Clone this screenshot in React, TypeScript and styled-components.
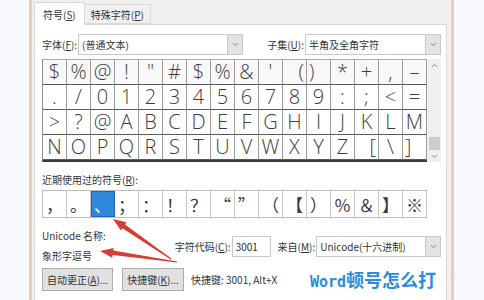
import React from "react";
import styled, { createGlobalStyle } from "styled-components";
import { ChevronDown, ChevronUp } from "lucide-react";

const GlobalStyle = createGlobalStyle`
  html, body {
    margin: 0;
    padding: 0;
    background: #f6f8fb;
  }
  body {
    font-family: "Noto Sans CJK SC", "Noto Sans", sans-serif;
    color: #333;
  }
`;

const symbolRows: string[][] = [
  ["$", "%", "@", "!", "\"", "#", "$", "%", "&", "'", "(", ")", "*", "+", ",", "–"],
  [".", "/", "0", "1", "2", "3", "4", "5", "6", "7", "8", "9", ":", ";", "<", "="],
  [">", "?", "@", "A", "B", "C", "D", "E", "F", "G", "H", "I", "J", "K", "L", "M"],
  ["N", "O", "P", "Q", "R", "S", "T", "U", "V", "W", "X", "Y", "Z", "[", "\\", "]"],
];

const recentSymbols = ["，", "。", "、", "；", "：", "！", "？", "“", "”", "（", "【", "）", "％", "＆", "】", "※"];

type Align = "start" | "center" | "end";

const alignOf = (ch: string): Align => {
  if (ch === "(" || ch === "[") return "end";
  if (ch === ")" || ch === "]") return "start";
  return "center";
};

type Pt = [number, number];

// tapered red arrow, computed from tail and tip
const arrowPoints = (tail: Pt, tip: Pt, headLen: number, headW: number, tailW: number, neckW: number) => {
  const dx = tip[0] - tail[0];
  const dy = tip[1] - tail[1];
  const len = Math.hypot(dx, dy);
  const ux = dx / len;
  const uy = dy / len;
  const nx = -uy;
  const ny = ux;
  const bx = tip[0] - ux * headLen;
  const by = tip[1] - uy * headLen;
  const pts: Pt[] = [
    [tail[0] + (nx * tailW) / 2, tail[1] + (ny * tailW) / 2],
    [bx + (nx * neckW) / 2, by + (ny * neckW) / 2],
    [bx + (nx * headW) / 2, by + (ny * headW) / 2],
    tip,
    [bx - (nx * headW) / 2, by - (ny * headW) / 2],
    [bx - (nx * neckW) / 2, by - (ny * neckW) / 2],
    [tail[0] - (nx * tailW) / 2, tail[1] - (ny * tailW) / 2],
  ];
  return pts.map((p) => `${p[0].toFixed(1)},${p[1].toFixed(1)}`).join(" ");
};

export default function App() {
  return (
    <>
      <GlobalStyle />
      <Page>
        <Frame>
          <TabBar>
            <Tab $active>
              符号(<u>S</u>)
            </Tab>
            <Tab>
              特殊字符(<u>P</u>)
            </Tab>
          </TabBar>
          <Panel>
            <FontRow>
              <Label>
                字体(<u>F</u>):
              </Label>
              <Select $width={165}>
                <SelectText>(普通文本)</SelectText>
                <DropButton>
                  <ChevronDown size={9} strokeWidth={2} />
                </DropButton>
              </Select>
              <Label $push>
                子集(<u>U</u>):
              </Label>
              <Select $width={136}>
                <SelectText>半角及全角字符</SelectText>
                <DropButton>
                  <ChevronDown size={9} strokeWidth={2} />
                </DropButton>
              </Select>
            </FontRow>

            <SymbolArea>
              <SymbolGrid>
                {symbolRows.map((row, r) =>
                  row.map((ch, c) => (
                    <SymbolCell key={`${r}-${c}`} $align={alignOf(ch)} $shade={r === 0}>
                      {ch}
                    </SymbolCell>
                  ))
                )}
              </SymbolGrid>
              <ScrollBar>
                <ScrollButton>
                  <ChevronUp size={9} strokeWidth={2} />
                </ScrollButton>
                <ScrollTrack>
                  <ScrollThumb />
                </ScrollTrack>
                <ScrollButton>
                  <ChevronDown size={9} strokeWidth={2} />
                </ScrollButton>
              </ScrollBar>
            </SymbolArea>

            <SectionLabel>
              近期使用过的符号(<u>R</u>):
            </SectionLabel>
            <RecentRow>
              {recentSymbols.map((ch, i) => (
                <RecentCell key={i} $selected={i === 2}>
                  {ch}
                </RecentCell>
              ))}
            </RecentRow>

            <InfoRow>
              <NameBlock>
                <NameLine>Unicode 名称:</NameLine>
                <NameLine>象形字逗号</NameLine>
              </NameBlock>
              <Label>
                字符代码(<u>C</u>):
              </Label>
              <CodeInput>3001</CodeInput>
              <Label $gap={7}>
                来自(<u>M</u>):
              </Label>
              <Select $width={125}>
                <SelectText>Unicode(十六进制)</SelectText>
                <DropButton>
                  <ChevronDown size={9} strokeWidth={2} />
                </DropButton>
              </Select>
            </InfoRow>

            <ButtonRow>
              <Button $width={71}>
                自动更正(<u>A</u>)...
              </Button>
              <Button $width={62}>
                快捷键(<u>K</u>)...
              </Button>
              <Shortcut>快捷键: 3001, Alt+X</Shortcut>
              <Caption>
                <CaptionLatin>Word</CaptionLatin>顿号怎么打
              </Caption>
            </ButtonRow>
          </Panel>
        </Frame>

        <Overlay width="484" height="300" viewBox="0 0 484 300">
          <polygon points={arrowPoints([171, 259], [113, 219], 13, 10, 1.2, 4.5)} fill="#d83d35" />
          <polygon points={arrowPoints([177, 262], [100, 251], 13, 10, 1.2, 4.5)} fill="#d83d35" />
        </Overlay>
      </Page>
    </>
  );
}

const Page = styled.div`
  position: relative;
  width: 484px;
  height: 300px;
  overflow: hidden;
  padding-left: 29px;
  box-sizing: border-box;
  background: #f6f8fb;
`;

const Frame = styled.div`
  width: 425px;
  height: 320px;
  box-sizing: border-box;
  border-left: 3px solid #e9cdb8;
  border-right: 3px solid #e9cdb8;
  background: #f0f0f0;
  display: flex;
  flex-direction: column;
`;

const TabBar = styled.div`
  display: flex;
  align-items: flex-end;
  height: 24px;
  padding-left: 2px;
  position: relative;
  z-index: 1;
`;

const Tab = styled.div<{ $active?: boolean }>`
  box-sizing: border-box;
  height: ${(p) => (p.$active ? "23px" : "20px")};
  margin-bottom: ${(p) => (p.$active ? "-1px" : "0")};
  padding: 0 ${(p) => (p.$active ? "8px" : "6px")};
  display: flex;
  align-items: center;
  font-size: 10px;
  color: #333;
  background: ${(p) => (p.$active ? "#ffffff" : "#f0f0f0")};
  border: 1px solid #d9d9d9;
  border-bottom: ${(p) => (p.$active ? "none" : "1px solid #d9d9d9")};
  border-left: ${(p) => (p.$active ? "1px solid #d9d9d9" : "none")};

  u {
    text-decoration-thickness: 1px;
  }
`;

const Panel = styled.div`
  flex: 1;
  width: 413px;
  margin-left: 2px;
  box-sizing: border-box;
  background: #ffffff;
  border: 1px solid #d9d9d9;
  padding: 0 5px 0 7px;
  display: flex;
  flex-direction: column;
`;

const FontRow = styled.div`
  display: flex;
  align-items: center;
  margin-top: 9px;
  height: 21px;
`;

const Label = styled.span<{ $push?: boolean; $gap?: number }>`
  font-size: 10px;
  color: #333;
  white-space: nowrap;
  margin-left: ${(p) => (p.$push ? "auto" : `${p.$gap ?? 0}px`)};
  margin-right: 1px;
`;

const Select = styled.div<{ $width: number }>`
  width: ${(p) => p.$width}px;
  height: 21px;
  box-sizing: border-box;
  border: 1px solid #c9c9c9;
  background: #fff;
  display: flex;
  align-items: center;
`;

const SelectText = styled.span`
  flex: 1;
  padding-left: 3px;
  font-size: 10px;
  color: #333;
  white-space: nowrap;
`;

const DropButton = styled.div`
  width: 15px;
  height: 100%;
  box-sizing: border-box;
  background: #e3e3e3;
  border-left: 1px solid #c9c9c9;
  display: flex;
  align-items: center;
  justify-content: center;
  color: #666;
`;

const SymbolArea = styled.div`
  display: flex;
  margin-top: 4px;
`;

const SymbolGrid = styled.div`
  display: grid;
  grid-template-columns: repeat(16, 24px);
  grid-auto-rows: 25px;
  border-top: 1px solid #a8a8a8;
  border-left: 1px solid #8e8e8e;
  border-bottom: 2px solid #3a3a3a;
`;

const SymbolCell = styled.div<{ $align: Align; $shade?: boolean }>`
  box-sizing: border-box;
  display: flex;
  align-items: center;
  justify-content: ${(p) =>
    p.$align === "start" ? "flex-start" : p.$align === "end" ? "flex-end" : "center"};
  padding: 0 2px 1px;
  border-right: 1px solid #9c9c9c;
  border-bottom: 1px solid #5a5a5a;
  background: ${(p) => (p.$shade ? "#f8f8f8" : "#ffffff")};
  font-family: "Open Sans", "DejaVu Sans", sans-serif;
  font-weight: 300;
  font-size: 20px;
  line-height: 1;
  color: #3c3c3c;
`;

const ScrollBar = styled.div`
  width: 16px;
  background: #f0f0f0;
  display: flex;
  flex-direction: column;
`;

const ScrollButton = styled.div`
  height: 12px;
  display: flex;
  align-items: center;
  justify-content: center;
  color: #606060;
`;

const ScrollTrack = styled.div`
  flex: 1;
  display: flex;
  flex-direction: column;
  justify-content: flex-end;
  align-items: center;
`;

const ScrollThumb = styled.div`
  width: 11px;
  height: 13px;
  background: #cdcdcd;
`;

const SectionLabel = styled.div`
  margin-top: 11px;
  height: 14px;
  line-height: 14px;
  font-size: 10px;
  color: #333;
`;

const RecentRow = styled.div`
  margin-top: 3px;
  display: grid;
  grid-template-columns: repeat(16, 24px);
  height: 26px;
  border-top: 1px solid #bcbcbc;
  border-left: 1px solid #bcbcbc;
  border-bottom: 1px solid #bcbcbc;
  box-sizing: content-box;
  width: 384px;
`;

const RecentCell = styled.div<{ $selected?: boolean }>`
  box-sizing: border-box;
  display: flex;
  align-items: center;
  justify-content: center;
  border-right: 1px solid #c4c4c4;
  font-family: "Noto Sans CJK SC", sans-serif;
  font-size: 17px;
  line-height: 1;
  color: ${(p) => (p.$selected ? "#ffffff" : "#3a3a3a")};
  background: ${(p) => (p.$selected ? "#2f88dc" : "#ffffff")};
  outline: ${(p) => (p.$selected ? "1px solid #1f66b0" : "none")};
  outline-offset: -1px;
`;

const InfoRow = styled.div`
  display: flex;
  align-items: center;
  margin-top: 8px;
`;

const NameBlock = styled.div`
  width: 133px;
  display: flex;
  flex-direction: column;
`;

const NameLine = styled.div`
  height: 20px;
  line-height: 20px;
  font-size: 10px;
  color: #333;
  white-space: nowrap;
`;

const CodeInput = styled.div`
  width: 39px;
  height: 21px;
  box-sizing: border-box;
  border: 1px solid #c9c9c9;
  background: #fff;
  padding-left: 3px;
  font-size: 10px;
  line-height: 19px;
  color: #333;
`;

const ButtonRow = styled.div`
  display: flex;
  align-items: center;
  margin-top: 2px;
  gap: 9px;
`;

const Button = styled.div<{ $width: number }>`
  width: ${(p) => p.$width}px;
  height: 23px;
  box-sizing: border-box;
  background: #e1e1e1;
  border: 1px solid #adadad;
  display: flex;
  align-items: center;
  justify-content: center;
  font-size: 10px;
  color: #333;
  white-space: nowrap;
`;

const Shortcut = styled.span`
  margin-left: -2px;
  font-size: 10px;
  color: #333;
  white-space: nowrap;
`;

const Caption = styled.span`
  margin-left: auto;
  margin-right: 5px;
  font-family: "Noto Sans CJK SC", sans-serif;
  font-weight: 700;
  font-size: 18px;
  line-height: 1;
  color: #2b8be0;
  white-space: nowrap;
`;

const CaptionLatin = styled.span`
  font-family: "DejaVu Sans Mono", "Liberation Mono", monospace;
  font-weight: 700;
  font-size: 15px;
`;

const Overlay = styled.svg`
  position: absolute;
  left: 0;
  top: 0;
  pointer-events: none;
`;
